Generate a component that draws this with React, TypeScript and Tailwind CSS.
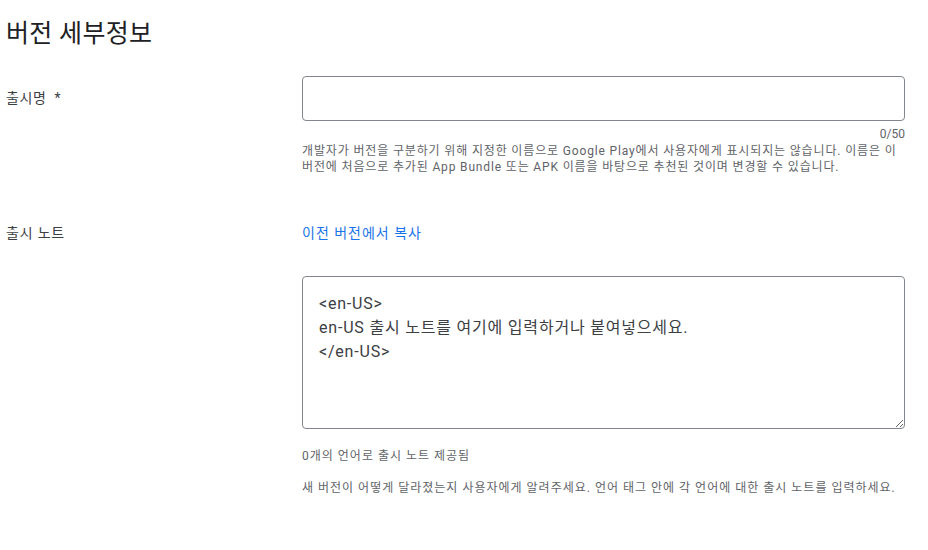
import { useState } from 'react';

const FONT = "font-['Roboto','Noto_Sans_CJK_KR',sans-serif]";

export default function App() {
  const [name, setName] = useState('');
  const [notes, setNotes] = useState('<en-US>\nen-US 출시 노트를 여기에 입력하거나 붙여넣으세요.\n</en-US>');

  return (
    <div className={`${FONT} min-h-[550px] w-[928px] bg-white pl-[6px] text-[#202124]`}>
      <h1 className="pt-[17px] text-[25px] leading-[34px] font-normal tracking-[0.3px]">버전 세부정보</h1>

      {/* Release name */}
      <div className="mt-[25px] grid grid-cols-[296px_603px]">
        <div className="pt-[12px] text-sm leading-5 tracking-[0.6px] text-[#3c4043]">
          출시명 <span className="ml-1">*</span>
        </div>
        <div>
          <input
            value={name}
            onChange={(e) => setName(e.target.value)}
            className="h-[45px] w-full rounded border border-[#80868b] px-4 text-base outline-none"
          />
          <div className="mt-[5px] text-right text-xs leading-4 text-[#5f6368]">{name.length}/50</div>
          <p className="mt-[1px] text-xs leading-4 tracking-[0.85px] whitespace-nowrap text-[#5f6368]">
            <span className="block">
              개발자가 버전을 구분하기 위해 지정한 이름으로 Google Play에서 사용자에게 표시되지는 않습니다. 이름은 이
            </span>
            <span className="block">
              버전에 처음으로 추가된 App Bundle 또는 APK 이름을 바탕으로 추천된 것이며 변경할 수 있습니다.
            </span>
          </p>
        </div>
      </div>

      {/* Release notes */}
      <div className="mt-[48px] grid grid-cols-[296px_603px]">
        <div className="text-sm leading-5 tracking-[0.8px] text-[#3c4043]">출시 노트</div>
        <div>
          <button className="block text-sm leading-5 tracking-[1px] text-[#1a73e8]">이전 버전에서 복사</button>
          <textarea
            value={notes}
            onChange={(e) => setNotes(e.target.value)}
            className="mt-[33px] block h-[153px] w-full resize-y rounded border border-[#80868b] px-4 pt-[15px] text-base leading-6 tracking-[0.8px] text-[#3c4043] outline-none"
          />
          <div className="mt-[19px] text-xs leading-4 tracking-[1px] text-[#5f6368]">0개의 언어로 출시 노트 제공됨</div>
          <div className="mt-[16px] text-xs leading-4 tracking-[1px] whitespace-nowrap text-[#5f6368]">
            새 버전이 어떻게 달라졌는지 사용자에게 알려주세요. 언어 태그 안에 각 언어에 대한 출시 노트를 입력하세요.
          </div>
        </div>
      </div>
    </div>
  );
}
